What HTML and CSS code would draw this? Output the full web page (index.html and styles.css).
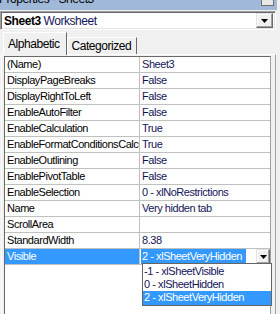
FILE: index.html
```html
<!DOCTYPE html>
<html lang="en">
<head>
  <meta charset="UTF-8">
  <title>Properties - Sheet3</title>
  <link rel="stylesheet" href="styles.css">
</head>
<body>
  <!-- window caption, scrolled mostly off the top -->
  <div class="title">
    <span class="title-text">Properties - Sheet3</span>
    <span class="close-btn"></span>
  </div>

  <!-- object picker -->
  <div class="combo">
    <span class="combo-text"><b>Sheet3</b> Worksheet</span>
    <span class="drop-btn">
      <svg width="7" height="4" viewBox="0 0 7 4"><path d="M0 0h7L3.5 4z" fill="#000"/></svg>
    </span>
  </div>

  <div class="tabs">
    <div class="tab active">Alphabetic</div>
    <div class="tab">Categorized</div>
  </div>

  <div class="page">
    <div class="grid">
      <div class="row"><div class="name">(Name)</div><div class="value">Sheet3</div></div>
      <div class="row"><div class="name">DisplayPageBreaks</div><div class="value">False</div></div>
      <div class="row"><div class="name">DisplayRightToLeft</div><div class="value">False</div></div>
      <div class="row"><div class="name">EnableAutoFilter</div><div class="value">False</div></div>
      <div class="row"><div class="name">EnableCalculation</div><div class="value">True</div></div>
      <div class="row"><div class="name">EnableFormatConditionsCalculation</div><div class="value">True</div></div>
      <div class="row"><div class="name">EnableOutlining</div><div class="value">False</div></div>
      <div class="row"><div class="name">EnablePivotTable</div><div class="value">False</div></div>
      <div class="row"><div class="name">EnableSelection</div><div class="value">0 - xlNoRestrictions</div></div>
      <div class="row"><div class="name">Name</div><div class="value">Very hidden tab</div></div>
      <div class="row"><div class="name">ScrollArea</div><div class="value"></div></div>
      <div class="row"><div class="name">StandardWidth</div><div class="value">8.38</div></div>
      <div class="row selected">
        <div class="name">Visible</div>
        <div class="value edit">
          <span class="edit-text">2 - xlSheetVeryHidden</span>
          <span class="drop-btn small">
            <svg width="7" height="4" viewBox="0 0 7 4"><path d="M0 0h7L3.5 4z" fill="#000"/></svg>
          </span>
        </div>
      </div>
    </div>

    <ul class="list">
      <li>-1 - xlSheetVisible</li>
      <li>0 - xlSheetHidden</li>
      <li class="current">2 - xlSheetVeryHidden</li>
    </ul>
  </div>
</body>
</html>
```

FILE: styles.css
```css
body {
  margin: 0;
  width: 280px;
  height: 314px;
  overflow: hidden;
  background: #f0f0f0;
  font-family: 'Liberation Sans', Arial, sans-serif;
  font-size: 11px;
  letter-spacing: -0.45px;
  color: #000;
  position: relative;
}

.title {
  height: 10px;
  width: 277px;
  background: #a0b9d9;
  position: relative;
  overflow: hidden;
}

.title-text {
  position: absolute;
  left: -1px;
  top: -8px;
  font-size: 12px;
  line-height: 14px;
}

.close-btn {
  position: absolute;
  left: 261px;
  top: -9px;
  width: 11px;
  height: 13px;
  background: #e8e8e8;
  border: 1px solid #6f6f6f;
}

.combo {
  margin-top: 1px;
  width: 274px;
  height: 17px;
  background: #fff;
  border: 1px solid;
  border-color: #a0a0a0 #fff #fff #a0a0a0;
  box-shadow: inset 1px 1px #696969, inset -1px -1px #e3e3e3;
  display: flex;
  align-items: center;
  justify-content: space-between;
}

.combo-text {
  padding-left: 3px;
  color: #14145a;
  font-size: 12px;
}

.combo-text b {
  color: #000;
}

.drop-btn {
  width: 15px;
  height: 13px;
  margin-right: 2px;
  background: #f0f0f0;
  border: 1px solid;
  border-color: #e3e3e3 #696969 #696969 #e3e3e3;
  box-shadow: inset -1px -1px #a0a0a0, inset 1px 1px #fff;
  display: flex;
  align-items: center;
  justify-content: center;
}

.tabs {
  height: 24px;
  padding-left: 3px;
  display: flex;
  align-items: flex-end;
  position: relative;
  z-index: 1;
}

.tab {
  height: 16px;
  padding: 0 5px 0 4px;
  border: 1px solid;
  border-color: #fff #696969 transparent #fff;
  border-bottom: 0;
  line-height: 16px;
  font-size: 12px;
}

.tab.active {
  height: 22px;
  margin-bottom: -1px;
  padding-right: 6px;
  background: #f0f0f0;
  line-height: 22px;
}

.page {
  position: relative;
  width: 267px;
  margin-left: 1px;
  height: 259px;
  padding: 1px 4px 0 2px;
  border: 1px solid;
  border-bottom: 0;
  border-color: #fff #a0a0a0 transparent #fff;
}

.grid {
  background: #fff;
  border: 1px solid #696969;
  border-right-color: #a0a0a0;
  height: 257px;
}

.row {
  display: grid;
  grid-template-columns: 135px 1fr;
  height: 15px;
  border-bottom: 1px solid #c0c0c0;
  line-height: 15px;
}

.name {
  padding-left: 2px;
  border-right: 1px solid #c0c0c0;
  white-space: nowrap;
  overflow: hidden;
}

.value {
  padding-left: 2px;
  color: #14145a;
  white-space: nowrap;
  overflow: hidden;
}

.row.selected .name {
  background: #3399ff;
  color: #fff;
}

.value.edit {
  padding-left: 1px;
  display: flex;
  justify-content: space-between;
  align-items: center;
}

.edit-text {
  background: #3399ff;
  color: #fff;
  padding: 0 4px 0 1px;
}

.drop-btn.small {
  width: 12px;
  height: 13px;
  margin-right: 0;
}

.list {
  position: absolute;
  left: 140px;
  top: 208px;
  width: 128px;
  margin: 0;
  padding: 1px 0 0;
  list-style: none;
  background: #fff;
  border: 1px solid #646464;
  color: #14145a;
}

.list li {
  height: 13px;
  line-height: 13px;
  padding-left: 1px;
}

.list li.current {
  background: #3399ff;
  color: #fff;
  height: 14px;
}
```
